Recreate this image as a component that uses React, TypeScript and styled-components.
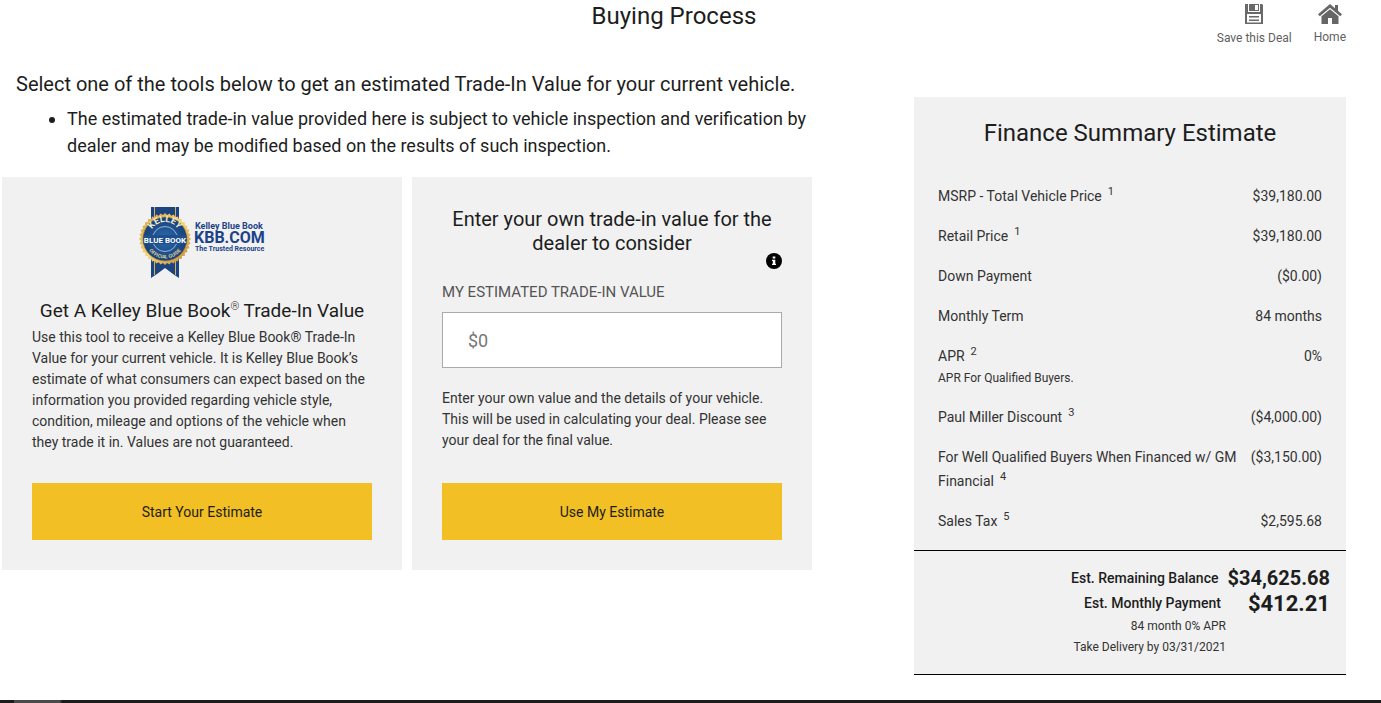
import React from 'react';
import styled, { createGlobalStyle } from 'styled-components';

const GlobalStyle = createGlobalStyle`
  *, *::before, *::after { box-sizing: border-box; }
  body {
    margin: 0;
    background: #fff;
    color: #1d1d1d;
    font-family: Roboto, Arial, sans-serif;
    font-size: 14px;
  }
  h1, h2, p, ul, dl, dd, figure { margin: 0; }
`;

const Page = styled.div`
  display: flex;
  flex-direction: column;
  min-height: 100vh;
`;

const Header = styled.header`
  display: grid;
  grid-template-columns: 1fr auto 1fr;
  align-items: start;
  height: 64px;
  padding: 0 35px 0 2px;
`;

const Title = styled.h1`
  grid-column: 2;
  font-size: 24px;
  line-height: 32px;
  font-weight: 400;
`;

const Actions = styled.nav`
  display: flex;
  justify-content: flex-end;
  gap: 22px;
`;

const Action = styled.a`
  display: flex;
  flex-direction: column;
  align-items: center;
  gap: 5px;
  padding-top: 3px;
  color: #5f5f5f;
  font-size: 12px;
  line-height: 16px;
  text-decoration: none;
`;

const Main = styled.main`
  flex: 1;
  display: grid;
  grid-template-columns: minmax(0, 1fr) 432px;
  column-gap: 102px;
  align-items: start;
  padding: 0 35px 25px 2px;
`;

const Intro = styled.div`
  padding: 5px 0 18px 14px;
`;

const Lead = styled.p`
  font-size: 20px;
  line-height: 30px;
  margin-bottom: 6px;
`;

const Notes = styled.ul`
  padding-left: 51px;
  font-size: 18px;
  line-height: 27px;
`;

const Cards = styled.div`
  display: grid;
  grid-template-columns: repeat(2, minmax(0, 1fr));
  gap: 10px;
`;

const Card = styled.section`
  display: flex;
  flex-direction: column;
  min-height: 393px;
  padding: 30px;
  background: #f1f1f1;
`;

const CardTitle = styled.h2<{ $size: number }>`
  font-size: ${(p) => p.$size}px;
  line-height: 24px;
  font-weight: 400;
  text-align: center;

  sup {
    font-size: 11px;
    font-weight: 300;
    line-height: 0;
  }
`;

const Logo = styled.svg`
  display: block;
  align-self: center;
  margin-bottom: 20px;
`;

const CardText = styled.p`
  color: #333;
  font-size: 14px;
  line-height: 21px;

  h2 + & { margin-top: 4px; }
`;

const Button = styled.button`
  width: 100%;
  height: 57px;
  margin-top: auto;
  border: 0;
  background: #f2bf24;
  color: #1d1d1d;
  font: 400 14px/20px Roboto, Arial, sans-serif;
  cursor: pointer;
`;

const InfoButton = styled.button`
  display: block;
  align-self: flex-end;
  width: 16px;
  height: 16px;
  margin: -2px 0 13px;
  padding: 0;
  border: 0;
  background: none;
  cursor: pointer;

  svg { display: block; }
`;

const Label = styled.label`
  color: #555;
  font-size: 15px;
  line-height: 20px;
  margin-bottom: 10px;
  text-transform: uppercase;
`;

const Input = styled.input`
  width: 100%;
  height: 56px;
  margin-bottom: 20px;
  padding: 0 25px;
  border: 1px solid #aaa;
  border-radius: 0;
  background: #fff;
  font: 400 18px/24px Roboto, Arial, sans-serif;

  &::placeholder { color: #777; opacity: 1; }
`;

const Summary = styled.aside`
  margin-top: 33px;
  padding-bottom: 16px;
  background: #f1f1f1;
  border-bottom: 1px solid #000;
`;

const SummaryTitle = styled.h2`
  padding-top: 20px;
  font-size: 24px;
  line-height: 32px;
  font-weight: 400;
  text-align: center;
`;

const Lines = styled.dl`
  padding: 35px 24px 17px;
`;

const Line = styled.div`
  display: flex;
  justify-content: space-between;
  gap: 14px;
  margin-bottom: 16px;
  color: #333;
  line-height: 24px;

  &:last-child { margin-bottom: 0; }
  dd { white-space: nowrap; }
  sup {
    margin-left: 6px;
    font-size: 11px;
    line-height: 0;
  }
`;

const SmallNote = styled.small`
  display: block;
  font-size: 12px;
  line-height: 21px;
`;

const Totals = styled.dl`
  padding: 15px 16px 0;
  border-top: 1px solid #000;
`;

const Total = styled.div<{ $gap: number; $size: number }>`
  display: flex;
  align-items: center;
  justify-content: flex-end;
  gap: ${(p) => p.$gap}px;
  line-height: 25px;
  font-weight: 500;

  dd {
    font-size: ${(p) => p.$size}px;
    font-weight: 700;
  }
`;

const Terms = styled.p`
  padding-right: 120px;
  color: #333;
  font-size: 12px;
  line-height: 21px;
  text-align: right;
`;

const Footer = styled.footer`
  height: 3px;
  background: linear-gradient(to right, #1d1b1e 14px, #4a4a4c 14px, #4a4a4c 60px, #1d1b1e 62px);
`;

const SaveIcon = () => (
  <svg width="20" height="22" viewBox="0 0 20 22" aria-hidden="true">
    <path fill="#696969" fillRule="evenodd" d="M1 1h17l1 1v19H1zM4 1v8h12V1zM3 11v8.500h14V11z" />
    <path fill="#696969" fillRule="evenodd" d="M5 1h10v7H5zM11 2v5h3V2zM5 13h10v1.500H5zM5 16.500h10V18H5z" />
  </svg>
);

const HomeIcon = () => (
  <svg width="24" height="21" viewBox="0 0 24 21" aria-hidden="true">
    <path fill="#666" d="M12 1 0 11.300l1.800 2L12 4.700l10.200 8.600 1.800-2-4-3.500V2h-3v3.200z" />
    <path fill="#666" d="M12 6.300 3.500 13.300V21H10v-6h4v6h6.500v-7.700z" />
  </svg>
);

const InfoIcon = () => (
  <svg width="16" height="16" viewBox="0 0 16 16" aria-hidden="true">
    <circle cx="8" cy="8" r="8" fill="#000" />
    <path fill="#fff" d="M6.700 3.500h2.600v2H6.700zM6 6.700h3.300v4H10V12H6v-1.300h.8V8H6z" />
  </svg>
);

const teeth = Array.from({ length: 72 }, (_, i) => {
  const r = i % 2 ? 24 : 26;
  const a = (i * Math.PI) / 36;
  return `${26 + r * Math.cos(a)},${32 + r * Math.sin(a)}`;
}).join(' ');

const KbbLogo = () => (
  <Logo width="126" height="72" viewBox="0 0 126 72" role="img" aria-label="Kelley Blue Book KBB.com, The Trusted Resource">
    <defs>
      <linearGradient id="gold" x1="0" y1="0" x2="1" y2="1">
        <stop offset="0" stopColor="#d09a38" />
        <stop offset=".5" stopColor="#f6d77c" />
        <stop offset="1" stopColor="#bd812b" />
      </linearGradient>
      <radialGradient id="seal">
        <stop offset="0" stopColor="#2c6bb0" />
        <stop offset="1" stopColor="#174078" />
      </radialGradient>
      <path id="arcTop" d="M11 30a15 15 0 0 1 30 0" />
      <path id="arcBottom" d="M6 31.500a20 20 0 0 0 40 0" />
    </defs>
    <path fill="#1b4480" d="M12 0h28v12H12zM12 50h28v21l-6-4-8-6-8 6-6 4z" />
    <path stroke="#d6b15c" strokeWidth="1" d="M15.500 0v12M36.500 0v12M15.500 52v16M36.500 52v16" />
    <polygon fill="url(#gold)" points={teeth} />
    <circle cx="26" cy="32" r="22" fill="url(#seal)" stroke="#b58531" strokeWidth=".7" />
    <circle cx="26" cy="32" r="12.500" fill="none" stroke="#b6cae2" strokeWidth=".8" />
    <path fill="#1d4e8d" d="M4.500 28h43v9h-43z" />
    <g fontFamily="Roboto, Arial, sans-serif" fontWeight="700">
      <text fill="#f1ead1" fontSize="9" textAnchor="middle">
        <textPath href="#arcTop" startOffset="50%">KELLEY</textPath>
      </text>
      <text x="26" y="36" fill="#fff" fontSize="8" textAnchor="middle">BLUE BOOK</text>
      <text fill="#dccb98" fontSize="5" textAnchor="middle">
        <textPath href="#arcBottom" startOffset="50%">OFFICIAL GUIDE</textPath>
      </text>
      <g fill="#1c4388">
        <text x="56" y="22" fontSize="9">Kelley Blue Book</text>
        <text x="55" y="36" fontSize="16">KBB.COM</text>
        <text x="56" y="44" fontSize="7">The Trusted Resource</text>
      </g>
    </g>
  </Logo>
);

type LineItem = { label: string; value: string; mark?: string; note?: string };

const items: LineItem[] = [
  { label: 'MSRP - Total Vehicle Price', mark: '1', value: '$39,180.00' },
  { label: 'Retail Price', mark: '1', value: '$39,180.00' },
  { label: 'Down Payment', value: '($0.00)' },
  { label: 'Monthly Term', value: '84 months' },
  { label: 'APR', mark: '2', value: '0%', note: 'APR For Qualified Buyers.' },
  { label: 'Paul Miller Discount', mark: '3', value: '($4,000.00)' },
  { label: 'For Well Qualified Buyers When Financed w/ GM Financial', mark: '4', value: '($3,150.00)' },
  { label: 'Sales Tax', mark: '5', value: '$2,595.68' },
];

export default function App() {
  return (
    <Page>
      <GlobalStyle />
      <Header>
        <Title>Buying Process</Title>
        <Actions>
          <Action href="#save"><SaveIcon />Save this Deal</Action>
          <Action href="#home"><HomeIcon />Home</Action>
        </Actions>
      </Header>
      <Main>
        <div>
          <Intro>
            <Lead>Select one of the tools below to get an estimated Trade-In Value for your current vehicle.</Lead>
            <Notes>
              <li>
                The estimated trade-in value provided here is subject to vehicle inspection and verification by
                dealer and may be modified based on the results of such inspection.
              </li>
            </Notes>
          </Intro>
          <Cards>
            <Card>
              <KbbLogo />
              <CardTitle $size={19}>Get A Kelley Blue Book<sup>®</sup> Trade-In Value</CardTitle>
              <CardText>
                Use this tool to receive a Kelley Blue Book® Trade-In Value for your current vehicle. It is Kelley
                Blue Book’s estimate of what consumers can expect based on the information you provided regarding
                vehicle style, condition, mileage and options of the vehicle when they trade it in. Values are not
                guaranteed.
              </CardText>
              <Button type="button">Start Your Estimate</Button>
            </Card>
            <Card>
              <CardTitle $size={20}>Enter your own trade-in value for the dealer to consider</CardTitle>
              <InfoButton type="button" aria-label="More information"><InfoIcon /></InfoButton>
              <Label htmlFor="trade-in">My Estimated Trade-In Value</Label>
              <Input id="trade-in" type="text" placeholder="$0" />
              <CardText>
                Enter your own value and the details of your vehicle. This will be used in calculating your deal.
                Please see your deal for the final value.
              </CardText>
              <Button type="button">Use My Estimate</Button>
            </Card>
          </Cards>
        </div>
        <Summary>
          <SummaryTitle>Finance Summary Estimate</SummaryTitle>
          <Lines>
            {items.map((item) => (
              <Line key={item.label}>
                <dt>
                  {item.label}
                  {item.mark && <sup>{item.mark}</sup>}
                  {item.note && <SmallNote>{item.note}</SmallNote>}
                </dt>
                <dd>{item.value}</dd>
              </Line>
            ))}
          </Lines>
          <Totals>
            <Total $gap={9} $size={20}>
              <dt>Est. Remaining Balance</dt>
              <dd>$34,625.68</dd>
            </Total>
            <Total $gap={27} $size={22}>
              <dt>Est. Monthly Payment</dt>
              <dd>$412.21</dd>
            </Total>
          </Totals>
          <Terms>84 month 0% APR</Terms>
          <Terms>Take Delivery by 03/31/2021</Terms>
        </Summary>
      </Main>
      <Footer />
    </Page>
  );
}
